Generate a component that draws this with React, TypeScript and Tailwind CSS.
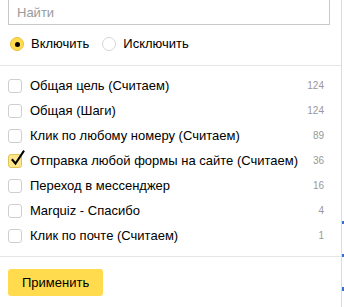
import React from "react";

const goals = [
  { name: "Общая цель (Считаем)", count: 124, checked: false },
  { name: "Общая (Шаги)", count: 124, checked: false },
  { name: "Клик по любому номеру (Считаем)", count: 89, checked: false },
  { name: "Отправка любой формы на сайте (Считаем)", count: 36, checked: true },
  { name: "Переход в мессенджер", count: 16, checked: false },
  { name: "Marquiz - Спасибо", count: 4, checked: false },
  { name: "Клик по почте (Считаем)", count: 1, checked: false },
];

function Radio({ label, active }: { label: string; active?: boolean }) {
  return (
    <label className="flex items-center gap-[7px]">
      {active ? (
        <span className="w-[14px] h-[14px] rounded-full bg-[#ffdb4d] border border-[#e8c43a] flex items-center justify-center">
          <span className="w-[5px] h-[5px] rounded-full bg-black" />
        </span>
      ) : (
        <span className="w-[14px] h-[14px] rounded-full bg-white border border-[#d6d6d6]" />
      )}
      <span>{label}</span>
    </label>
  );
}

function Checkbox({ checked }: { checked: boolean }) {
  return (
    <span
      className={`relative w-[14px] h-[14px] rounded-[3px] border shrink-0 ${
        checked ? "bg-[#ffe68a] border-[#e0c45a]" : "bg-white border-[#cfcfcf]"
      }`}
    >
      {checked && (
        <svg className="absolute -top-[5px] left-[1px]" width="16" height="16" viewBox="0 0 16 16">
          <path d="M2.5 10 L5.5 13.5 L13.5 1.5" fill="none" stroke="#000" strokeWidth="2" strokeLinecap="square" />
        </svg>
      )}
    </span>
  );
}

export default function App() {
  return (
    <div className="flex w-[344px] h-[307px] bg-white text-[13px] text-black overflow-hidden" style={{ fontFamily: '"Liberation Sans", Arial, sans-serif' }}>
      <div className="w-[342px] shrink-0 border-r border-[#dcdcdc] flex flex-col">
        <div className="pl-2 pr-[11px] pb-[11px]">
          <input
            placeholder="Найти"
            className="-mt-px w-full h-[26px] border border-[#c8c8c8] px-2 text-[13px] placeholder:text-[#9a9a9a] outline-none"
          />
          <div className="mt-[9px] h-5 flex items-center gap-[13px] pl-[2px]">
            <Radio label="Включить" active />
            <Radio label="Исключить" />
          </div>
        </div>
        <div className="border-t border-[#e6e6e6] pt-[7px] pb-2 pl-2 pr-[17px]">
          {goals.map((g) => (
            <div key={g.name} className="h-[25px] flex items-center">
              <Checkbox checked={g.checked} />
              <span className="ml-[8px] flex-1">{g.name}</span>
              <span className="text-[10px] text-[#999]">{g.count}</span>
            </div>
          ))}
        </div>
        <div className="border-t border-[#e6e6e6] pt-[12px] px-2">
          <button className="h-[27px] px-[14px] rounded-[3px] bg-[#ffdb4d] text-[13px] text-black">
            Применить
          </button>
        </div>
      </div>
      <div className="flex-1 flex flex-col pt-[221px] gap-[30px]">
        <span className="h-[3px] bg-[#3a6fd1]" />
        <span className="h-[3px] bg-[#3a6fd1]" />
        <span className="h-[4px] bg-[#3a6fd1]" />
      </div>
    </div>
  );
}
